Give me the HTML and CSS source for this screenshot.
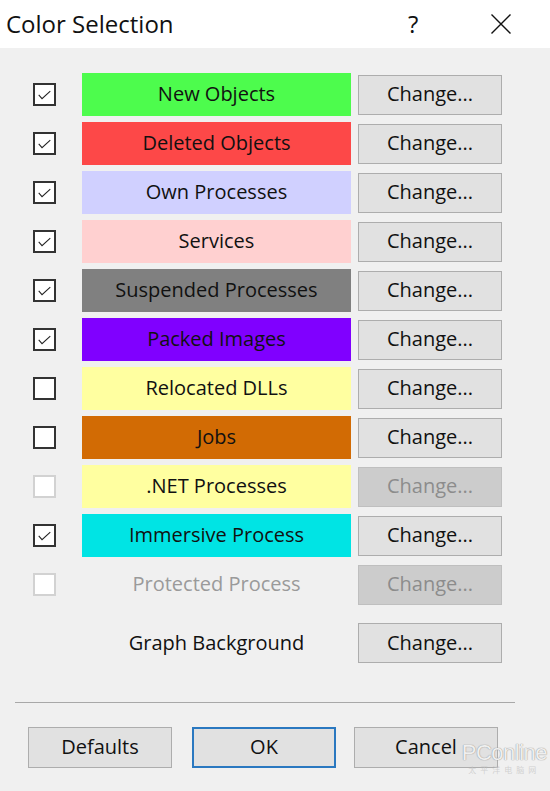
FILE: index.html
```html
<!DOCTYPE html>
<html lang="en">
<head>
    <meta charset="UTF-8">
    <meta name="viewport" content="width=device-width, initial-scale=1.0">
    <title>Color Selection</title>
    <link rel="stylesheet" href="styles.css">
</head>
<body>
    <div class="dialog">
        <div class="titlebar">
            <span class="title">Color Selection</span>
            <span class="help">?</span>
            <span class="close">
                <svg width="22" height="20" viewBox="0 0 22 20"><path d="M1.5 0.5 L20.5 19.5 M20.5 0.5 L1.5 19.5" stroke="#111" stroke-width="1.4" fill="none"/></svg>
            </span>
        </div>

        <div class="rows">
            <div class="row">
                <span class="check on"><svg viewBox="0 0 23 23"><polyline points="4.5,12 8.5,16.5 18.5,7.5"/></svg></span>
                <span class="swatch" style="background:#4dfc4d">New Objects</span>
                <button class="change">Change...</button>
            </div>
            <div class="row">
                <span class="check on"><svg viewBox="0 0 23 23"><polyline points="4.5,12 8.5,16.5 18.5,7.5"/></svg></span>
                <span class="swatch" style="background:#fd4848">Deleted Objects</span>
                <button class="change">Change...</button>
            </div>
            <div class="row">
                <span class="check on"><svg viewBox="0 0 23 23"><polyline points="4.5,12 8.5,16.5 18.5,7.5"/></svg></span>
                <span class="swatch" style="background:#d0d0ff">Own Processes</span>
                <button class="change">Change...</button>
            </div>
            <div class="row">
                <span class="check on"><svg viewBox="0 0 23 23"><polyline points="4.5,12 8.5,16.5 18.5,7.5"/></svg></span>
                <span class="swatch" style="background:#ffd0d0">Services</span>
                <button class="change">Change...</button>
            </div>
            <div class="row">
                <span class="check on"><svg viewBox="0 0 23 23"><polyline points="4.5,12 8.5,16.5 18.5,7.5"/></svg></span>
                <span class="swatch" style="background:#808080">Suspended Processes</span>
                <button class="change">Change...</button>
            </div>
            <div class="row">
                <span class="check on"><svg viewBox="0 0 23 23"><polyline points="4.5,12 8.5,16.5 18.5,7.5"/></svg></span>
                <span class="swatch" style="background:#8000ff">Packed Images</span>
                <button class="change">Change...</button>
            </div>
            <div class="row">
                <span class="check"></span>
                <span class="swatch" style="background:#ffffa0">Relocated DLLs</span>
                <button class="change">Change...</button>
            </div>
            <div class="row">
                <span class="check"></span>
                <span class="swatch" style="background:#d26b04">Jobs</span>
                <button class="change">Change...</button>
            </div>
            <div class="row">
                <span class="check disabled"></span>
                <span class="swatch" style="background:#ffffa0">.NET Processes</span>
                <button class="change" disabled>Change...</button>
            </div>
            <div class="row">
                <span class="check on"><svg viewBox="0 0 23 23"><polyline points="4.5,12 8.5,16.5 18.5,7.5"/></svg></span>
                <span class="swatch" style="background:#00e4e4">Immersive Process</span>
                <button class="change">Change...</button>
            </div>
            <div class="row">
                <span class="check disabled"></span>
                <span class="swatch muted">Protected Process</span>
                <button class="change" disabled>Change...</button>
            </div>
            <div class="row graph">
                <span class="check blank"></span>
                <span class="swatch plain">Graph Background</span>
                <button class="change">Change...</button>
            </div>
        </div>

        <hr class="separator">

        <div class="footer">
            <button class="btn">Defaults</button>
            <button class="btn default">OK</button>
            <button class="btn cancel">Cancel</button>
        </div>

        <div class="watermark">
            <span class="wm-logo">PConline</span>
            <span class="wm-sub">太平洋电脑网</span>
        </div>
    </div>
</body>
</html>
```

FILE: styles.css
```css
body {
    margin: 0;
    background-color: #f0f0f0;
    font-family: "Open Sans", "Noto Sans", sans-serif;
    color: #111;
}
.dialog {
    position: relative;
    width: 550px;
    height: 791px;
    background-color: #f0f0f0;
    overflow: hidden;
}
.titlebar {
    display: flex;
    align-items: center;
    height: 48px;
    background-color: #fff;
    padding-left: 6px;
}
.title {
    font-size: 24px;
    flex: 1;
    padding-bottom: 2px;
}
.help {
    font-size: 24px;
    width: 20px;
    margin-right: 62px;
    padding-bottom: 2px;
}
.close {
    display: flex;
    width: 22px;
    margin-right: 38px;
}
.rows {
    display: flex;
    flex-direction: column;
    gap: 6px;
    padding: 25px 0 0 33px;
}
.row {
    display: flex;
    align-items: center;
    height: 43px;
}
.row.graph {
    margin-top: 10px;
    height: 42px;
}
.check {
    box-sizing: border-box;
    width: 23px;
    height: 23px;
    border: 2px solid #333;
    background-color: #fff;
    display: flex;
}
.check svg {
    width: 19px;
    height: 19px;
    margin: 0;
}
.check polyline {
    fill: none;
    stroke: #222;
    stroke-width: 1.3;
}
.check.disabled {
    border-color: #d2d2d2;
}
.check.blank {
    border: none;
    background: none;
}
.swatch {
    box-sizing: border-box;
    width: 269px;
    height: 43px;
    margin-left: 26px;
    display: flex;
    align-items: center;
    justify-content: center;
    font-size: 20px;
    padding-bottom: 2px;
}
.swatch.muted {
    color: #9a9a9a;
}
.change {
    box-sizing: border-box;
    width: 144px;
    height: 40px;
    margin-left: 7px;
    background-color: #e1e1e1;
    border: 1px solid #adadad;
    font-family: inherit;
    font-size: 20px;
    color: #111;
    padding: 0 0 2px;
}
.change:disabled {
    background-color: #cccccc;
    border-color: #bfbfbf;
    color: #8c8c8c;
}
.separator {
    margin: 38px 0 0 15px;
    width: 500px;
    border: none;
    border-top: 1px solid #a8a8a8;
    height: 0;
}
.footer {
    display: flex;
    gap: 20px;
    padding: 24px 0 0 28px;
}
.btn {
    box-sizing: border-box;
    width: 144px;
    height: 41px;
    background-color: #e1e1e1;
    border: 1px solid #adadad;
    font-family: inherit;
    font-size: 20px;
    color: #111;
    padding: 0 0 2px;
}
.btn.default {
    border: 2px solid #2a78c0;
}
.btn.cancel {
    margin-left: -2px;
}
.watermark {
    position: absolute;
    right: 3px;
    bottom: 16px;
    display: flex;
    flex-direction: column;
    align-items: center;
    pointer-events: none;
}
.wm-logo {
    font-family: "Liberation Sans", Arial, sans-serif;
    font-size: 22px;
    color: rgba(255, 255, 255, 0.85);
    text-shadow: 0 0 1px #999, 0 0 1px #999;
    letter-spacing: -0.5px;
}
.wm-sub {
    font-family: "Noto Sans CJK SC", sans-serif;
    font-size: 8px;
    color: rgba(200, 200, 200, 0.8);
    letter-spacing: 4px;
    margin-top: -2px;
}
```
